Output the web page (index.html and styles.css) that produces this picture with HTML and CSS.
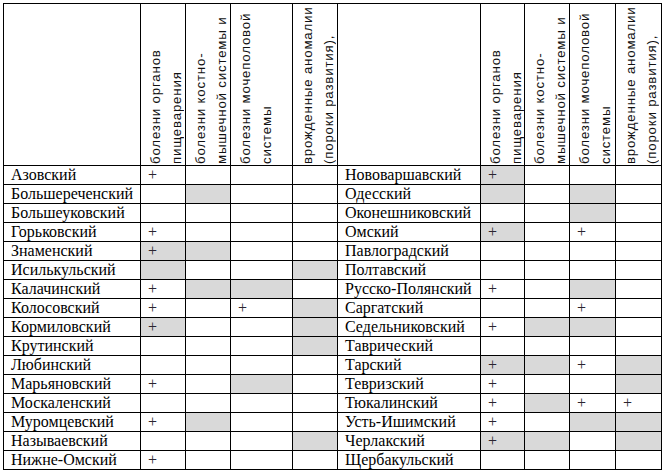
FILE: index.html
```html
<!DOCTYPE html>
<html lang="ru">
<head>
<meta charset="utf-8">
<title>Районы</title>
<link rel="stylesheet" href="styles.css">
</head>
<body>
<table class="t">
<colgroup>
<col class="w-n1"><col class="w-45"><col class="w-45"><col class="w-62"><col class="w-45">
<col class="w-n2"><col class="w-44"><col class="w-45"><col class="w-46"><col class="w-46">
</colgroup>
<thead>
<tr class="hrow">
<th></th>
<th class="vh"><div class="vt">болезни органов<br>пищеварения</div></th>
<th class="vh"><div class="vt">болезни костно-<br>мышечной системы и</div></th>
<th class="vh"><div class="vt">болезни мочеполовой<br>системы</div></th>
<th class="vh"><div class="vt">врожденные аномалии<br>(пороки развития),</div></th>
<th></th>
<th class="vh"><div class="vt">болезни органов<br>пищеварения</div></th>
<th class="vh"><div class="vt">болезни костно-<br>мышечной системы и</div></th>
<th class="vh"><div class="vt">болезни мочеполовой<br>системы</div></th>
<th class="vh"><div class="vt">врожденные аномалии<br>(пороки развития),</div></th>
</tr>
</thead>
<tbody>
<tr><td class="nm">Азовский</td><td>+</td><td></td><td></td><td></td><td class="nm">Нововаршавский</td><td class="g">+</td><td></td><td></td><td></td></tr>
<tr><td class="nm">Большереченский</td><td></td><td class="g"></td><td></td><td></td><td class="nm">Одесский</td><td class="g"></td><td></td><td class="g"></td><td></td></tr>
<tr><td class="nm">Большеуковский</td><td></td><td></td><td></td><td></td><td class="nm">Оконешниковский</td><td></td><td></td><td class="g"></td><td></td></tr>
<tr><td class="nm">Горьковский</td><td>+</td><td></td><td></td><td></td><td class="nm">Омский</td><td class="g">+</td><td></td><td>+</td><td></td></tr>
<tr><td class="nm">Знаменский</td><td class="g">+</td><td class="g"></td><td></td><td></td><td class="nm">Павлоградский</td><td></td><td></td><td></td><td></td></tr>
<tr><td class="nm">Исилькульский</td><td class="g"></td><td></td><td></td><td class="g"></td><td class="nm">Полтавский</td><td></td><td></td><td></td><td></td></tr>
<tr><td class="nm">Калачинский</td><td>+</td><td class="g"></td><td class="g"></td><td></td><td class="nm">Русско-Полянский</td><td>+</td><td></td><td class="g"></td><td></td></tr>
<tr><td class="nm">Колосовский</td><td>+</td><td></td><td>+</td><td class="g"></td><td class="nm">Саргатский</td><td></td><td></td><td>+</td><td></td></tr>
<tr><td class="nm">Кормиловский</td><td class="g">+</td><td></td><td></td><td class="g"></td><td class="nm">Седельниковский</td><td>+</td><td class="g"></td><td class="g"></td><td></td></tr>
<tr><td class="nm">Крутинский</td><td></td><td></td><td></td><td class="g"></td><td class="nm">Таврический</td><td></td><td></td><td></td><td></td></tr>
<tr><td class="nm">Любинский</td><td></td><td></td><td></td><td></td><td class="nm">Тарский</td><td class="g">+</td><td class="g"></td><td>+</td><td class="g"></td></tr>
<tr><td class="nm">Марьяновский</td><td>+</td><td></td><td class="g"></td><td></td><td class="nm">Тевризский</td><td>+</td><td></td><td></td><td class="g"></td></tr>
<tr><td class="nm">Москаленский</td><td></td><td></td><td></td><td></td><td class="nm">Тюкалинский</td><td>+</td><td class="g"></td><td>+</td><td>+</td></tr>
<tr><td class="nm">Муромцевский</td><td>+</td><td class="g"></td><td></td><td></td><td class="nm">Усть-Ишимский</td><td>+</td><td></td><td class="g"></td><td class="g"></td></tr>
<tr><td class="nm">Называевский</td><td></td><td></td><td></td><td class="g"></td><td class="nm">Черлакский</td><td class="g">+</td><td class="g"></td><td></td><td class="g"></td></tr>
<tr><td class="nm">Нижне-Омский</td><td>+</td><td></td><td></td><td></td><td class="nm">Щербакульский</td><td></td><td></td><td></td><td></td></tr>
</tbody>
</table>
</body>
</html>
```
FILE: styles.css
```css
html, body {
  margin: 0;
  padding: 0;
  background: #fff;
}
body {
  padding: 3px 0 0 3px;
}
.t {
  border-collapse: collapse;
  table-layout: fixed;
  width: 659px;
  font-family: "Liberation Serif", "Times New Roman", serif;
  font-size: 16px;
  color: #000;
}
.w-n1 { width: 137px; }
.w-n2 { width: 143px; }
.w-44 { width: 44px; }
.w-45 { width: 45px; }
.w-46 { width: 46px; }
.w-62 { width: 62px; }
.t th,
.t td {
  border: 1px solid #000;
  padding: 0 0 0 7px;
  text-align: left;
  white-space: nowrap;
  overflow: visible;
}
.t tbody tr {
  height: 19px;
}
.t td {
  line-height: 18px;
  vertical-align: middle;
  color: #2b2430;
}
.t td.nm {
  color: #000;
}
.t td.g {
  background: #d9d9d9;
}
.hrow {
  height: 162px;
}
.t th {
  vertical-align: bottom;
  font-weight: normal;
}
.t th.vh {
  padding: 0 0 1px 4px;
}
.vt {
  writing-mode: vertical-rl;
  transform: rotate(180deg);
  height: 160px;
  text-align: start;
  font-family: "Liberation Sans", Arial, sans-serif;
  font-size: 13.3px;
  letter-spacing: 0.8px;
  line-height: 21px;
  color: #111;
}
```
